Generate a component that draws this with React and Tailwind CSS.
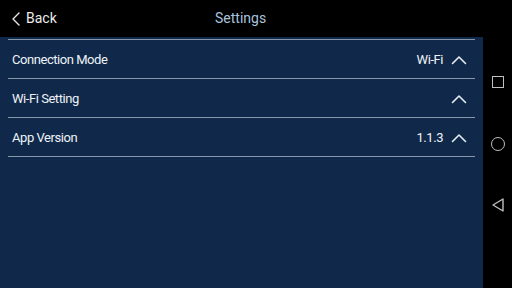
import React from "react";

function Chevron() {
  return (
    <svg width="16" height="10" viewBox="0 0 16 10" fill="none" stroke="#e6edf5" strokeWidth="1.6" strokeLinecap="round" strokeLinejoin="round">
      <path d="M1.5 8.5 L8 2 L14.5 8.5" />
    </svg>
  );
}

function Row({ label, value }) {
  return (
    <div className="flex h-[39px] items-center border-b border-[#8796aa] pl-1 pr-2 pt-[2px]">
      <span className="flex-1 text-[13px] tracking-[-0.45px] text-[#eef2f7]">{label}</span>
      {value && <span className="mr-2 text-[13px] tracking-[-0.45px] text-[#eef2f7]">{value}</span>}
      <Chevron />
    </div>
  );
}

export default function App() {
  return (
    <div className="flex h-[288px] w-[512px] flex-col bg-black" style={{ fontFamily: "Roboto, 'Liberation Sans', sans-serif" }}>
      <div className="relative flex h-[37px] items-center">
        <div className="flex items-center pl-[12px]">
          <svg width="8" height="14" viewBox="0 0 8 14" fill="none" stroke="#e8e8e8" strokeWidth="1.4" strokeLinecap="round" strokeLinejoin="round">
            <path d="M7 1 L1 7 L7 13" />
          </svg>
          <span className="ml-[6px] text-[14px] text-[#ececec]">Back</span>
        </div>
        <span className="absolute left-[215px] text-[14px] text-[#a9c3df]">Settings</span>
      </div>
      <div className="flex flex-1">
        <div className="w-[483px] bg-[#10294a] pl-[8px] pr-[8px] pt-[2px]">
          <div className="border-t border-[#8796aa]">
            <Row label="Connection Mode" value="Wi-Fi" />
            <Row label="Wi-Fi Setting" />
            <Row label="App Version" value="1.1.3" />
          </div>
        </div>
        <div className="flex flex-1 flex-col items-center pt-[39px]">
          <div className="h-[12px] w-[12px] border-[1.5px] border-[#bfbfbf]" />
          <div className="mt-[49px] h-[14px] w-[14px] rounded-full border-[1.5px] border-[#bfbfbf]" />
          <svg className="mt-[47px]" width="12" height="14" viewBox="0 0 12 14" fill="none" stroke="#bfbfbf" strokeWidth="1.4" strokeLinejoin="round">
            <path d="M11 1 L1 7 L11 13 Z" />
          </svg>
        </div>
      </div>
    </div>
  );
}
